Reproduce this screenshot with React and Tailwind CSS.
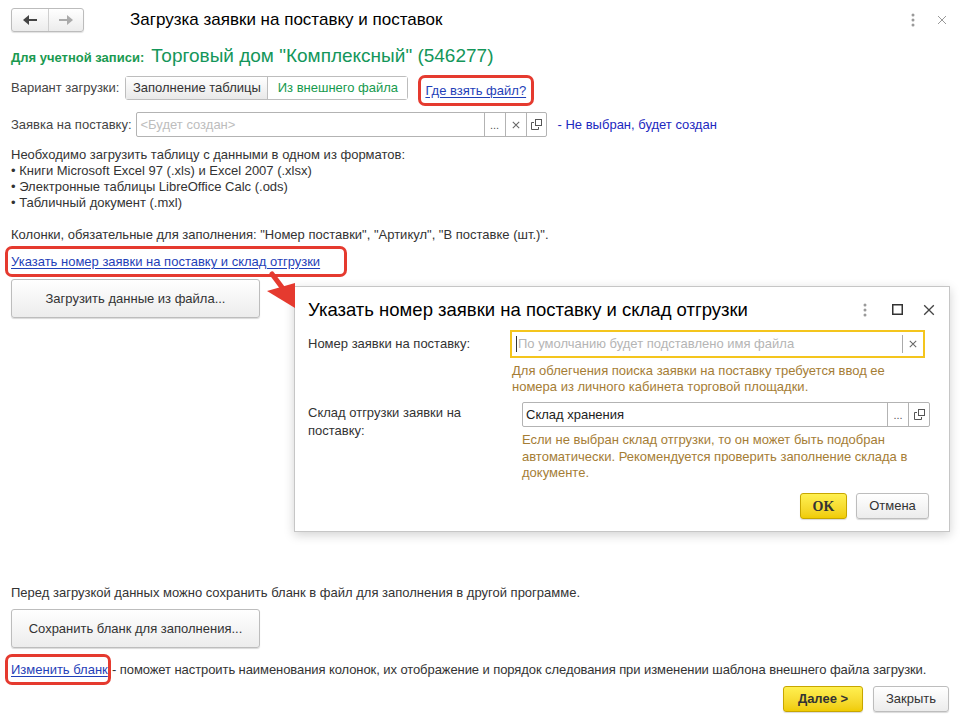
import React from 'react';

const FONT = "font-['Liberation_Sans',Arial,sans-serif]";

function Dots({ className = '' }) {
  return (
    <svg width="4" height="14" viewBox="0 0 4 14" className={className}>
      <circle cx="2" cy="2" r="1.5" fill="#9a9a9a" />
      <circle cx="2" cy="7" r="1.5" fill="#9a9a9a" />
      <circle cx="2" cy="12" r="1.5" fill="#9a9a9a" />
    </svg>
  );
}

function Cross({ size = 10, color = '#8a8a8a', width = 1.2 }) {
  return (
    <svg width={size} height={size} viewBox="0 0 10 10">
      <path d="M1 1 L9 9 M9 1 L1 9" stroke={color} strokeWidth={width} fill="none" />
    </svg>
  );
}

function OpenIcon() {
  return (
    <svg width="11" height="11" viewBox="0 0 11 11">
      <rect x="4.5" y="0.5" width="6" height="6" fill="none" stroke="#555" />
      <path d="M3 3.5 H0.5 V10.5 H7.5 V8" fill="none" stroke="#555" />
    </svg>
  );
}

function Arrow({ dir, color }) {
  const d = dir === 'left' ? 'M0 5 L6 0 L6 10 Z' : 'M14 5 L8 0 L8 10 Z';
  const r = dir === 'left' ? 'M5 4 H14 V6 H5 Z' : 'M0 4 H9 V6 H0 Z';
  return (
    <svg width="14" height="10" viewBox="0 0 14 10">
      <path d={d} fill={color} />
      <path d={r} fill={color} />
    </svg>
  );
}

function GrayButton({ children, className = '' }) {
  return (
    <button className={`flex items-center justify-center rounded-[3px] border border-[#bdbdbd] bg-gradient-to-b from-white to-[#ececec] text-[#333] shadow-[0_1px_1px_rgba(0,0,0,0.15)] ${className}`}>
      {children}
    </button>
  );
}

function YellowButton({ children, className = '' }) {
  return (
    <button className={`flex items-center justify-center rounded-[3px] border border-[#c7a600] bg-gradient-to-b from-[#fff04f] to-[#f0cc00] font-bold text-[#333] shadow-[0_1px_1px_rgba(0,0,0,0.15)] ${className}`}>
      {children}
    </button>
  );
}

function RedBox({ children, className = '' }) {
  return (
    <div className={`flex items-center rounded-[7px] border-[3px] border-[#e53a2f] ${className}`}>
      {children}
    </div>
  );
}

function Dialog() {
  return (
    <div className="absolute left-[294px] top-[286px] flex h-[246px] w-[656px] flex-col border border-[#c6c6c6] bg-white shadow-[0_3px_10px_rgba(0,0,0,0.18)]">
      <div className="flex h-[43px] shrink-0 items-center pl-[13px] pr-[14px] pt-[2px]">
        <span className="text-[18.5px] text-black">Указать номер заявки на поставку и склад отгрузки</span>
        <div className="ml-auto flex items-center">
          <Dots />
          <svg width="11" height="11" viewBox="0 0 11 11" className="ml-[25px]">
            <rect x="0.75" y="0.75" width="9.5" height="9.5" fill="none" stroke="#333" strokeWidth="1.5" />
          </svg>
          <span className="ml-[20px]"><Cross size={12} color="#444" width={1.1} /></span>
        </div>
      </div>

      <div className="flex items-center pl-[13px]">
        <span className="w-[202px] text-[#333]">Номер заявки на поставку:</span>
        <div className="flex h-[28px] w-[415px] items-center border-2 border-[#f4c51d] bg-white">
          <span className="ml-[4px] h-[16px] w-px bg-[#333]" />
          <span className="ml-[1px] text-[#b5b5b5]">По умолчанию будет подставлено имя файла</span>
          <div className="ml-auto flex h-[18px] w-[21px] items-center justify-center border-l border-[#aaa]">
            <Cross size={8} color="#666" width={1.3} />
          </div>
        </div>
      </div>
      <div className="mt-[5px] pl-[217px] leading-[16px] text-[#a57d35]">
        Для облегчения поиска заявки на поставку требуется ввод ее<br />
        номера из личного кабинета торговой площадки.
      </div>

      <div className="mt-[7px] flex items-start pl-[13px]">
        <span className="mt-[2px] w-[214px] leading-[18px] text-[#333]">Склад отгрузки заявки на<br />поставку:</span>
        <div className="flex flex-col">
          <div className="flex h-[25px] w-[408px] items-center rounded-[2px] border border-[#b3b3b3] bg-white">
            <span className="ml-[3px] text-[#222]">Склад хранения</span>
            <div className="ml-auto flex h-full w-[21px] items-end justify-center border-l border-[#b3b3b3] pb-[5px] text-[11px] leading-none text-[#555]">...</div>
            <div className="flex h-full w-[21px] items-center justify-center border-l border-[#b3b3b3]">
              <OpenIcon />
            </div>
          </div>
          <div className="mt-[5px] leading-[16.5px] text-[#a57d35]">
            Если не выбран склад отгрузки, то он может быть подобран<br />
            автоматически. Рекомендуется проверить заполнение склада в<br />
            документе.
          </div>
        </div>
      </div>

      <div className="mt-auto mb-[12px] flex justify-end gap-[9px] pr-[20px]">
        <YellowButton className="h-[26px] w-[47px] font-['Liberation_Serif',serif] text-[14px]">OK</YellowButton>
        <GrayButton className="h-[26px] w-[73px]">Отмена</GrayButton>
      </div>
    </div>
  );
}

export default function App() {
  return (
    <div className={`relative h-[725px] w-[966px] overflow-hidden bg-white text-[13px] text-[#333] ${FONT}`}>
      <div className="flex h-[40px] items-center pl-[11px] pr-[19px]">
        <div className="flex h-[24px] w-[73px] rounded-[3px] border border-[#bcbcbc] bg-gradient-to-b from-white to-[#ececec] shadow-[0_1px_1px_rgba(0,0,0,0.12)]">
          <div className="flex w-[37px] items-center justify-center border-r border-[#cfcfcf]">
            <Arrow dir="left" color="#444" />
          </div>
          <div className="flex flex-1 items-center justify-center">
            <Arrow dir="right" color="#aaa" />
          </div>
        </div>
        <span className="ml-[46px] text-[17px] text-black">Загрузка заявки на поставку и поставок</span>
        <div className="ml-auto flex items-center gap-[22px]">
          <Dots />
          <Cross size={10} color="#999" width={1} />
        </div>
      </div>

      <div className="flex h-[28px] items-baseline pl-[11px] pt-[2px]">
        <span className="font-bold text-[#1a9a50]">Для учетной записи:</span>
        <span className="ml-[7px] text-[19px] text-[#14965a]">Торговый дом "Комплексный" (546277)</span>
      </div>

      <div className="mt-[8px] flex h-[24px] items-center pl-[11px]">
        <span className="text-[#444]">Вариант загрузки:</span>
        <div className="ml-[6px] flex h-[24px] rounded-[3px] border border-[#bdbdbd]">
          <div className="flex w-[142px] items-center justify-center border-r border-[#bdbdbd] bg-gradient-to-b from-white to-[#e9e9e9] text-[#333]">Заполнение таблицы</div>
          <div className="flex w-[139px] items-center justify-center bg-white text-[#169a4e]">Из внешнего файла</div>
        </div>
        <RedBox className="ml-[10px] mt-[5px] h-[31px] w-[116px] shrink-0 pl-[4px]">
          <a className="text-[#1f3fb8] underline underline-offset-2">Где взять файл?</a>
        </RedBox>
      </div>

      <div className="mt-[12px] flex h-[25px] items-center pl-[11px]">
        <span className="text-[#444]">Заявка на поставку:</span>
        <div className="ml-[4px] flex h-[25px] w-[411px] items-center rounded-[2px] border border-[#b3b3b3]">
          <span className="ml-[4px] text-[#bdbdbd]">&lt;Будет создан&gt;</span>
          <div className="ml-auto flex h-full w-[21px] items-end justify-center border-l border-[#b3b3b3] pb-[5px] text-[11px] leading-none text-[#555]">...</div>
          <div className="flex h-full w-[21px] items-center justify-center border-l border-[#b3b3b3]">
            <Cross size={8} color="#666" width={1.3} />
          </div>
          <div className="flex h-full w-[20px] items-center justify-center border-l border-[#b3b3b3]">
            <OpenIcon />
          </div>
        </div>
        <span className="ml-[11px] text-[#1c28c0]">- Не выбран, будет создан</span>
      </div>

      <div className="mt-[10px] pl-[11px] leading-[16px] text-[#333]">
        <div>Необходимо загрузить таблицу с данными в одном из форматов:</div>
        <div>• Книги Microsoft Excel 97 (.xls) и Excel 2007 (.xlsx)</div>
        <div>• Электронные таблицы LibreOffice Calc (.ods)</div>
        <div>• Табличный документ (.mxl)</div>
        <div className="h-[16px]" />
        <div>Колонки, обязательные для заполнения: "Номер поставки", "Артикул", "В поставке (шт.)".</div>
      </div>

      <RedBox className="ml-[5px] mt-[3px] h-[31px] w-[342px] pl-[3px]">
        <a className="text-[#1f3fb8] underline underline-offset-2">Указать номер заявки на поставку и склад отгрузки</a>
      </RedBox>

      <GrayButton className="ml-[11px] mt-[2px] h-[39px] w-[249px]">Загрузить данные из файла...</GrayButton>

      <div className="mt-[267px] pl-[11px] leading-[16px]">Перед загрузкой данных можно сохранить бланк в файл для заполнения в другой программе.</div>

      <GrayButton className="ml-[11px] mt-[8px] h-[39px] w-[249px]">Сохранить бланк для заполнения...</GrayButton>

      <div className="ml-[5px] mt-[6px] flex h-[31px] items-center">
        <RedBox className="h-[31px] w-[106px] shrink-0 pl-[3px]">
          <a className="text-[#1f3fb8] underline underline-offset-2">Изменить бланк</a>
        </RedBox>
        <span className="ml-[1px] tracking-[-0.08px]">- поможет настроить наименования колонок, их отображение и порядок следования при изменении шаблона внешнего файла загрузки.</span>
      </div>

      <div className="mt-[1px] flex justify-end gap-[10px] pr-[17px]">
        <YellowButton className="h-[26px] w-[80px] text-[13px]">Далее &gt;</YellowButton>
        <GrayButton className="h-[26px] w-[76px]">Закрыть</GrayButton>
      </div>

      <Dialog />

      <svg className="absolute left-0 top-0" width="966" height="725" viewBox="0 0 966 725" pointerEvents="none">
        <path d="M272 274 L284 290" stroke="#e53a2f" strokeWidth="5" strokeLinecap="round" />
        <path d="M267 291 L295 283 L295 308 Z" fill="#e53a2f" />
      </svg>
    </div>
  );
}
